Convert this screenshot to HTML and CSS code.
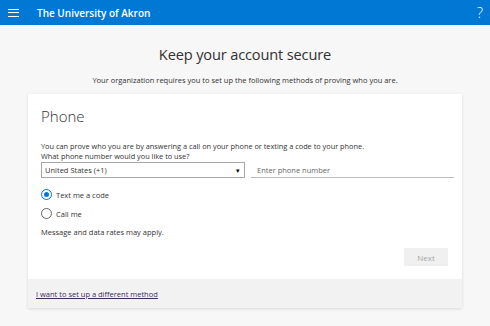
FILE: index.html
```html
<!DOCTYPE html>
<html lang="en">
<head>
<meta charset="utf-8">
<title>Keep your account secure</title>
<link rel="stylesheet" href="styles.css">
</head>
<body>
<header class="topbar">
  <div class="menu" aria-label="Menu">
    <span></span><span></span><span></span>
  </div>
  <div class="org">The University of Akron</div>
  <div class="help">?</div>
</header>
<main class="page">
  <h1 class="title">Keep your account secure</h1>
  <p class="subtitle">Your organization requires you to set up the following methods of proving who you are.</p>
  <section class="card">
    <div class="card-body">
      <h2 class="method">Phone</h2>
      <p class="desc">You can prove who you are by answering a call on your phone or texting a code to your phone.<br>What phone number would you like to use?</p>
      <div class="phone-row">
        <div class="select"><span>United States (+1)</span><span class="arrow">&#9662;</span></div>
        <div class="input"><span class="placeholder">Enter phone number</span></div>
      </div>
      <div class="options">
        <label class="option"><span class="radio checked"></span>Text me a code</label>
        <label class="option"><span class="radio"></span>Call me</label>
      </div>
      <p class="note">Message and data rates may apply.</p>
      <div class="actions"><button class="next">Next</button></div>
    </div>
    <div class="card-footer"><a class="link" href="#">I want to set up a different method</a></div>
  </section>
</main>
</body>
</html>
```
FILE: styles.css
```css
* { box-sizing: border-box; }
html, body { margin: 0; padding: 0; }
body {
  background: #f7f7f7;
  font-family: "Open Sans", "Noto Sans", sans-serif;
  color: #333;
  width: 490px;
  height: 326px;
  overflow: hidden;
}
.topbar {
  height: 25px;
  background: #0078d4;
  color: #fff;
  display: flex;
  align-items: center;
}
.menu {
  width: 11px;
  margin-left: 8px;
  display: flex;
  flex-direction: column;
  gap: 2.5px;
}
.menu span { display: block; height: 1px; background: #fff; }
.org {
  margin-left: 18px;
  font-size: 10px;
  font-weight: 600;
  flex: 1;
}
.help {
  font-size: 15px;
  font-weight: 300;
  margin-right: 7px;
  line-height: 1;
}
.page {
  display: flex;
  flex-direction: column;
  align-items: center;
}
.title {
  margin: 17px 0 0;
  font-size: 14.6px;
  font-weight: 400;
  letter-spacing: -0.15px;
  line-height: 24px;
  color: #323130;
}
.subtitle {
  margin: 9px 0 0;
  font-size: 7.5px;
  line-height: 11px;
  color: #333;
}
.card {
  margin-top: 8px;
  width: 434px;
  background: #fff;
  box-shadow: 0 1px 3px rgba(0,0,0,0.12);
}
.card-body {
  padding: 10px 14px 13px 13px;
}
.method {
  margin: 0;
  font-size: 15px;
  font-weight: 300;
  line-height: 24px;
  color: #333;
}
.desc {
  margin: 14px 0 0;
  font-size: 7.35px;
  line-height: 9.5px;
  color: #333;
}
.phone-row {
  display: flex;
  gap: 6px;
  margin-top: 1px;
  margin-right: -6px;
}
.select {
  width: 204px;
  height: 16px;
  border: 1px solid #a6a6a6;
  display: flex;
  align-items: center;
  justify-content: space-between;
  padding: 0 4px 0 3px;
  font-size: 7.5px;
  color: #333;
}
.arrow { font-size: 7px; color: #000; }
.input {
  flex: 1;
  height: 16px;
  border-bottom: 1px solid #bbb;
  display: flex;
  align-items: center;
  padding-left: 6px;
  font-size: 7.5px;
}
.placeholder { color: #666; }
.options {
  margin-top: 11px;
  display: flex;
  flex-direction: column;
  gap: 8px;
}
.option {
  display: flex;
  align-items: center;
  gap: 4px;
  font-size: 7.5px;
  line-height: 10px;
  color: #333;
}
.radio {
  width: 11px;
  height: 11px;
  border-radius: 50%;
  border: 1px solid #666;
  display: inline-block;
  position: relative;
  background: #fff;
}
.radio.checked { border-color: #0078d4; }
.radio.checked::after {
  content: "";
  position: absolute;
  left: 2px; top: 2px;
  width: 5px; height: 5px;
  border-radius: 50%;
  background: #0078d4;
}
.note {
  margin: 8px 0 0;
  font-size: 7.5px;
  line-height: 10px;
  color: #333;
}
.actions {
  display: flex;
  justify-content: flex-end;
  margin-top: 11px;
}
.next {
  width: 44px;
  height: 18px;
  border: none;
  background: #f0f0f0;
  color: #a6a6a6;
  font-family: inherit;
  font-size: 8px;
  padding: 0;
}
.card-footer {
  background: #f2f2f2;
  height: 29px;
  display: flex;
  align-items: center;
  padding-left: 8px;
}
.link {
  font-size: 7.5px;
  color: #3a2e55;
  text-decoration: underline;
}
```
